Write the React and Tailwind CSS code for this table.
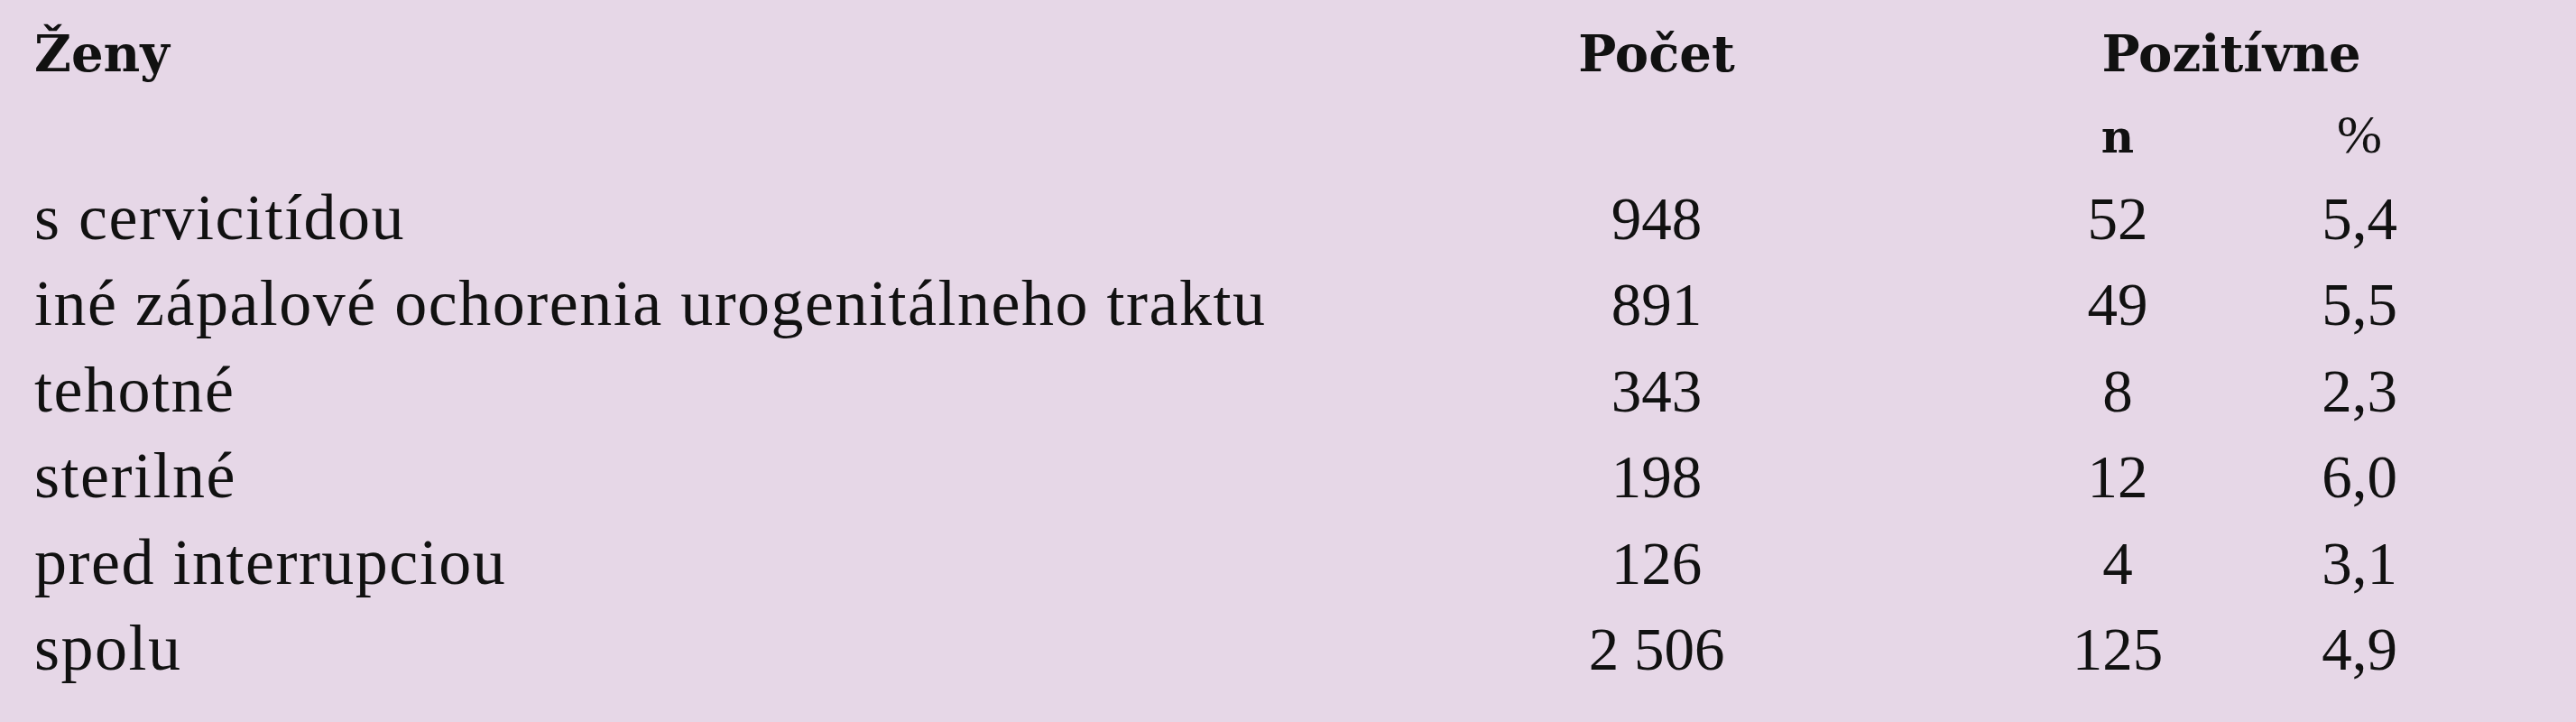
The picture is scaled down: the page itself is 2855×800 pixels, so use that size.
import React from "react";

const rows = [
  ["s cervicitídou", "948", "52", "5,4"],
  ["iné zápalové ochorenia urogenitálneho traktu", "891", "49", "5,5"],
  ["tehotné", "343", "8", "2,3"],
  ["sterilné", "198", "12", "6,0"],
  ["pred interrupciou", "126", "4", "3,1"],
  ["spolu", "2 506", "125", "4,9"],
];

const grid =
  "grid grid-cols-[1648px_300px_261px_200px_68px_200px] items-baseline";

const bold = { fontFamily: '"DejaVu Serif", "Liberation Serif", serif' };

export default function App() {
  return (
    <div
      className="w-full h-[800px] bg-[#e6d7e7] text-[#111111] pl-[38px] pt-[12px] overflow-hidden"
      style={{ fontFamily: '"Liberation Serif", "Times New Roman", serif' }}
    >
      <div
        className={`${grid} h-[90px] leading-[95px] text-[56px] font-bold`}
        style={bold}
      >
        <div>Ženy</div>
        <div className="text-center">Počet</div>
        <div />
        <div className="col-span-3 text-center pr-[16px]">Pozitívne</div>
      </div>
      <div className={`${grid} h-[92px] leading-[95px]`}>
        <div />
        <div />
        <div />
        <div className="text-center text-[50px] font-bold" style={bold}>
          n
        </div>
        <div />
        <div className="text-center text-[60px]">%</div>
      </div>
      {rows.map((r) => (
        <div key={r[0]} className={`${grid} h-[95.4px] leading-[95px]`}>
          <div className="text-[72px] tracking-[1.5px] whitespace-nowrap">{r[0]}</div>
          <div className="text-center text-[67px] whitespace-nowrap">{r[1]}</div>
          <div />
          <div className="text-center text-[67px]">{r[2]}</div>
          <div />
          <div className="text-center text-[67px]">{r[3]}</div>
        </div>
      ))}
    </div>
  );
}
